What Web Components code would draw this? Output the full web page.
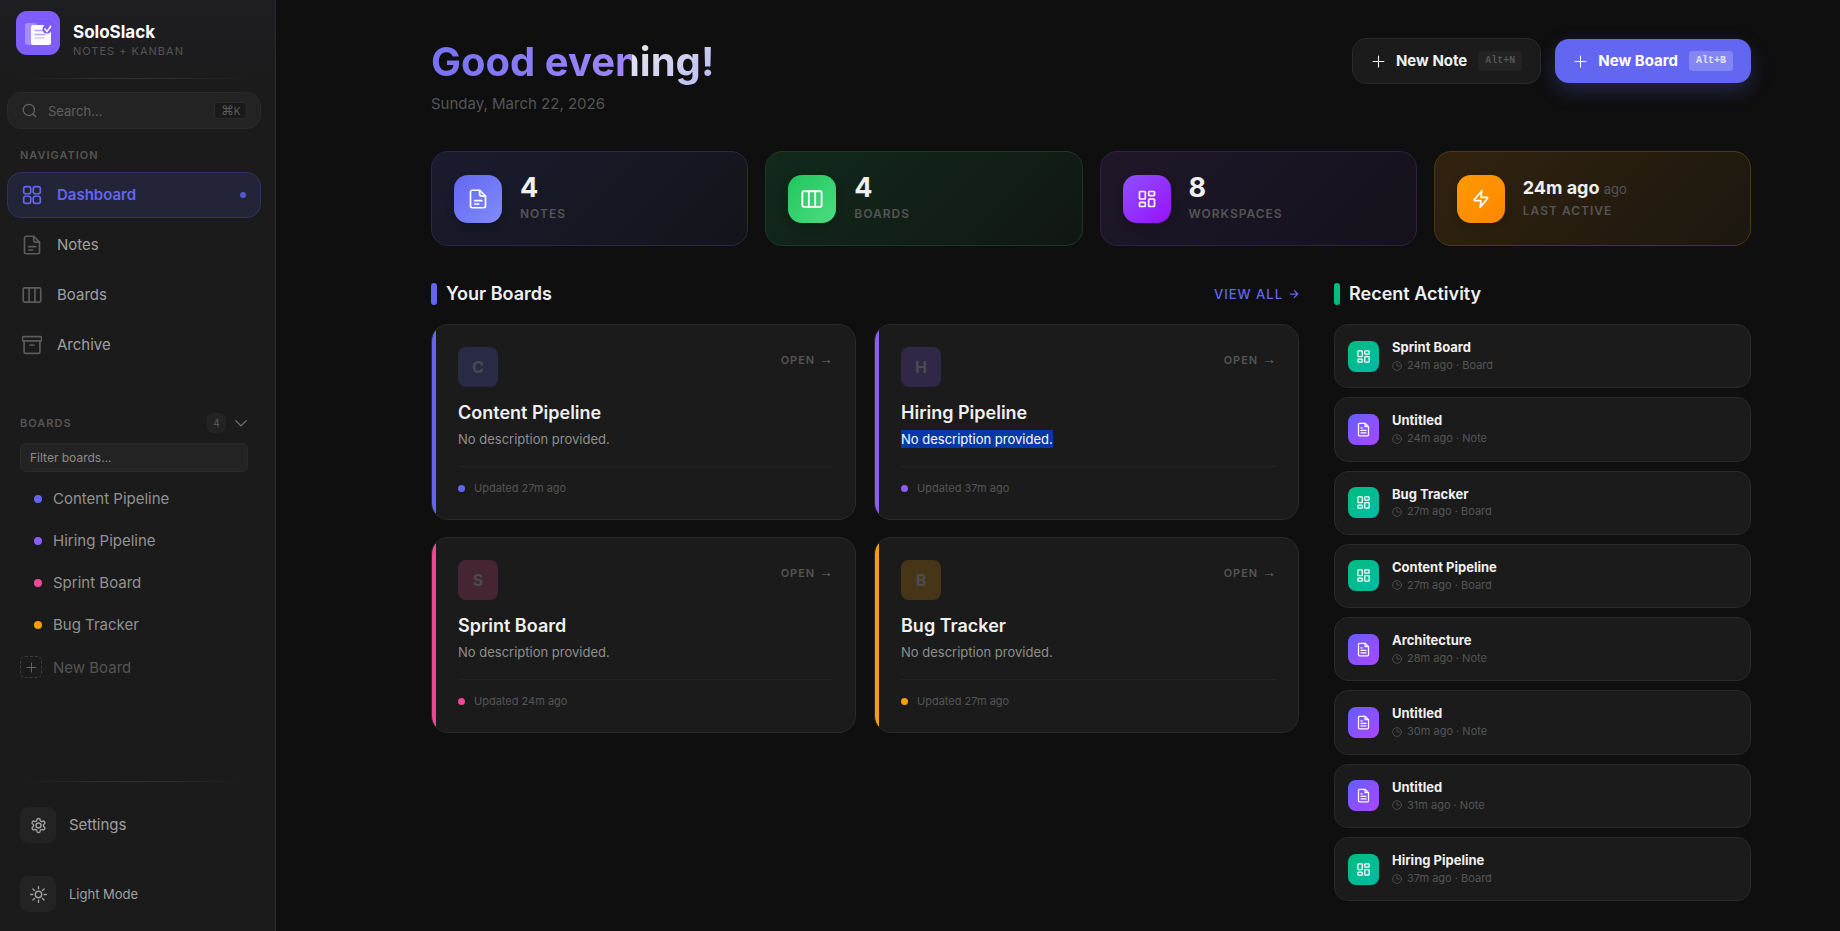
<!DOCTYPE html>
<html lang="en">
<head>
<meta charset="utf-8">
<meta name="viewport" content="width=device-width, initial-scale=1">
<title>SoloSlack</title>
<style>
  html, body {
    margin: 0;
    background: #0f0f0f;
  }

  body {
    --panel: #1b1b1b;
    --raised: #232323;
    --line: #2a2a2a;
    --text: #f0f0f0;
    --text-2: #a0a0a0;
    --muted: #555;
    --accent: #6366f1;
    font-family: Inter, "Liberation Sans", sans-serif;
    color: var(--text);
  }
</style>
</head>
<body>
<solo-app>
  <solo-sidebar slot="sidebar"></solo-sidebar>
  <solo-dashboard></solo-dashboard>
</solo-app>

<script>
const ICONS = {
  search: '<circle cx="11" cy="11" r="9"/><path d="M22 22l-4.500-4.500"/>',
  grid: '<rect x="2" y="2" width="8.500" height="8.500" rx="2.500"/><rect x="13.500" y="2" width="8.500" height="8.500" rx="2.500"/><rect x="2" y="13.500" width="8.500" height="8.500" rx="2.500"/><rect x="13.500" y="13.500" width="8.500" height="8.500" rx="2.500"/>',
  note: '<path d="M14 1.500H5a2 2 0 0 0-2 2v17a2 2 0 0 0 2 2h14a2 2 0 0 0 2-2V8.500z"/><path d="M14 1.500v4.500a2.500 2.500 0 0 0 2.500 2.500H21M8 14h8.500M8 18h5"/>',
  columns: '<rect x="1.500" y="3.500" width="21" height="17" rx="1.500"/><path d="M8.500 3.500v17M15.500 3.500v17"/>',
  archive: '<rect x="0.500" y="2" width="23" height="5" rx="1"/><path d="M2.500 7v13.500a1.500 1.500 0 0 0 1.500 1.500h16a1.500 1.500 0 0 0 1.500-1.500V7M9.500 12h5"/>',
  chevron: '<path d="M3 8l9 9 9-9"/>',
  plus: '<path d="M12 2v20M2 12h20"/>',
  layout: '<rect x="3" y="3" width="7" height="9" rx="1"/><rect x="14" y="3" width="7" height="5" rx="1"/><rect x="14" y="12" width="7" height="9" rx="1"/><rect x="3" y="16" width="7" height="5" rx="1"/>',
  bolt: '<path d="M13 2 4.100 12.700c-.6.700-.2 1.300.5 1.300H12l-1 8 8.900-10.700c.6-.7.2-1.300-.5-1.300H12z"/>',
  file: '<path d="M14.500 2H5.500a1.500 1.500 0 0 0-1.500 1.500v17a1.500 1.500 0 0 0 1.500 1.500h13a1.500 1.500 0 0 0 1.500-1.500V7.500z"/><path d="M14.500 2v5.500H20M8 9.500h2M8 13.500h8M8 17.500h8"/>',
  clock: '<circle cx="12" cy="12" r="10.500"/><path d="M12 5.500V12h5.500"/>',
  arrow: '<path d="M3 12h18M13 4l8 8-8 8"/>',
  gear: '<path d="M12.220 2h-.44a2 2 0 0 0-2 2v.18a2 2 0 0 1-1 1.730l-.43.250a2 2 0 0 1-2 0l-.15-.08a2 2 0 0 0-2.730.730l-.22.380a2 2 0 0 0 .73 2.730l.15.100a2 2 0 0 1 1 1.720v.510a2 2 0 0 1-1 1.740l-.15.090a2 2 0 0 0-.73 2.730l.22.380a2 2 0 0 0 2.730.730l.15-.08a2 2 0 0 1 2 0l.43.250a2 2 0 0 1 1 1.730V20a2 2 0 0 0 2 2h.44a2 2 0 0 0 2-2v-.18a2 2 0 0 1 1-1.730l.43-.25a2 2 0 0 1 2 0l.15.080a2 2 0 0 0 2.730-.73l.22-.39a2 2 0 0 0-.73-2.730l-.15-.08a2 2 0 0 1-1-1.740v-.5a2 2 0 0 1 1-1.740l.15-.09a2 2 0 0 0 .73-2.730l-.22-.38a2 2 0 0 0-2.730-.73l-.15.080a2 2 0 0 1-2 0l-.43-.25a2 2 0 0 1-1-1.730V4a2 2 0 0 0-2-2z"/><circle cx="12" cy="12" r="3.500"/>',
  sun: '<circle cx="12" cy="12" r="4.500"/><path d="M12 1v3M12 20v3M1 12h3M20 12h3M4.200 4.200l2 2M17.800 17.800l2 2M4.200 19.800l2-2M17.800 6.200l2-2"/>'
};

class SoloIcon extends HTMLElement {
  connectedCallback() {
    const size = this.getAttribute('size') || 20;
    const weight = this.getAttribute('weight') || 2;
    this.attachShadow({ mode: 'open' }).innerHTML = `
      <style>
        :host { display: inline-flex; flex: none; }
        svg { display: block; fill: none; stroke: currentColor; stroke-linecap: round; stroke-linejoin: round; }
      </style>
      <svg width="${size}" height="${size}" viewBox="0 0 24 24" stroke-width="${weight}" aria-hidden="true">${ICONS[this.getAttribute('name')]}</svg>
    `;
  }
}
customElements.define('solo-icon', SoloIcon);

class SoloApp extends HTMLElement {
  constructor() {
    super();
    this.attachShadow({ mode: 'open' }).innerHTML = `
      <style>
        :host { display: grid; grid-template-columns: 276px 1fr; height: 100vh; overflow: hidden; }
        main { overflow: hidden; padding: 38px 24px 24px 90px; }
      </style>
      <slot name="sidebar"></slot>
      <main><slot></slot></main>
    `;
  }
}
customElements.define('solo-app', SoloApp);

class SoloNavItem extends HTMLElement {
  connectedCallback() {
    this.attachShadow({ mode: 'open' }).innerHTML = `
      <style>
        :host { display: block; }
        a {
          display: flex;
          align-items: center;
          gap: 15px;
          box-sizing: border-box;
          height: 46px;
          padding: 0 14px;
          border: 1px solid transparent;
          border-radius: 14px;
          color: var(--text-2);
          font-size: 15px;
          line-height: 20px;
          text-decoration: none;
        }
        solo-icon { color: #5c5c5c; }
        :host([active]) a {
          background: #242438;
          border-color: #313160;
          color: var(--accent);
          font-weight: 600;
        }
        :host([active]) solo-icon { color: var(--accent); }
        :host([active]) a::after {
          content: "";
          width: 6px;
          height: 6px;
          margin-left: auto;
          border-radius: 50%;
          background: #5557cf;
        }
      </style>
      <a href="#"><solo-icon name="${this.getAttribute('icon')}" size="20"></solo-icon><span><slot></slot></span></a>
    `;
  }
}
customElements.define('solo-nav-item', SoloNavItem);

class SoloBoardLink extends HTMLElement {
  connectedCallback() {
    this.attachShadow({ mode: 'open' }).innerHTML = `
      <style>
        :host { display: block; }
        a {
          display: flex;
          align-items: center;
          gap: 11px;
          height: 42px;
          padding-left: 14px;
          color: #929292;
          font-size: 15px;
          line-height: 20px;
          text-decoration: none;
        }
        i { width: 8px; height: 8px; border-radius: 50%; background: ${this.getAttribute('color')}; }
      </style>
      <a href="#"><i></i><slot></slot></a>
    `;
  }
}
customElements.define('solo-board-link', SoloBoardLink);

class SoloSidebar extends HTMLElement {
  constructor() {
    super();
    this.attachShadow({ mode: 'open' }).innerHTML = `
      <style>
        :host {
          display: flex;
          flex-direction: column;
          box-sizing: border-box;
          height: 100vh;
          padding: 11px 14px 19px 7px;
          border-right: 1px solid var(--line);
          background: linear-gradient(#1e1e22, var(--panel) 100px);
        }
        .brand { display: flex; gap: 13px; padding-left: 9px; }
        .logo { flex: none; display: block; }
        .name { padding-top: 11px; }
        .name b { display: block; font-size: 17px; line-height: 20px; color: #fff; }
        .name small { display: block; margin-top: 2px; font-size: 11px; line-height: 14px; letter-spacing: 1px; color: var(--muted); }
        hr { width: 234px; height: 1px; margin: 20px 0 0 9px; border: 0; background: linear-gradient(90deg, transparent, #333, transparent); }
        .search {
          display: flex;
          align-items: center;
          gap: 11px;
          box-sizing: border-box;
          height: 37px;
          margin-top: 13px;
          padding: 0 13px 0 14px;
          border: 1px solid var(--line);
          border-radius: 14px;
          background: var(--raised);
          color: #666;
        }
        input { font: inherit; color: var(--text); outline: none; }
        .search input { flex: 1; min-width: 0; padding: 0; border: 0; background: none; font-size: 13px; }
        .search input::placeholder { color: #606060; }
        .search kbd {
          display: flex;
          align-items: center;
          justify-content: center;
          box-sizing: border-box;
          width: 33px;
          height: 17px;
          border: 1px solid var(--line);
          border-radius: 4px;
          background: #1a1a1a;
          color: #5c5c5c;
          font: 10px Inter, sans-serif;
        }
        .search kbd span { font: 13px/14px "DejaVu Sans", sans-serif; }
        h2 { margin: 0; font-size: 11px; line-height: 16px; font-weight: 600; letter-spacing: 1px; color: var(--muted); }
        nav { display: grid; }
        .primary { gap: 4px; margin-top: 9px; }
        .nav-title { margin: 18px 0 0 13px; }
        .boards { padding: 45px 13px 0; }
        .boards header { display: flex; align-items: center; height: 20px; }
        .count {
          display: grid;
          place-items: center;
          width: 19px;
          height: 20px;
          margin-left: auto;
          border-radius: 6px;
          background: var(--raised);
          font-size: 10px;
          color: #5c5c5c;
        }
        button { font: inherit; border: 0; background: none; cursor: pointer; }
        .toggle { display: flex; margin-left: 8px; padding: 0; color: #777; }
        .filter {
          box-sizing: border-box;
          width: 100%;
          height: 29px;
          margin-top: 10px;
          padding: 0 9px;
          border: 1px solid var(--line);
          border-radius: 6px;
          background: var(--raised);
          font-size: 12px;
        }
        .filter::placeholder { color: #8c8c8c; }
        .list { margin-top: 6px; }
        .new { display: flex; align-items: center; gap: 11px; height: 42px; padding: 0; color: var(--muted); font-size: 15px; }
        .new span { display: grid; place-items: center; box-sizing: border-box; width: 22px; height: 22px; border: 1px dashed #3c3c3c; border-radius: 5px; color: #6c6c6c; }
        footer { margin-top: auto; }
        .row {
          display: flex;
          align-items: center;
          gap: 13px;
          height: 36px;
          padding: 0 0 0 13px;
          color: var(--text-2);
          font-size: 15px;
          line-height: 20px;
          text-decoration: none;
        }
        .row span { display: grid; place-items: center; width: 36px; height: 36px; border-radius: 8px; background: var(--raised); }
        .settings { margin: 25px 0 33px; }
        .mode { font-size: 13px; }
      </style>
      <div class="brand">
        <svg class="logo" width="44" height="44" viewBox="0 0 44 44" aria-hidden="true">
          <rect width="44" height="44" rx="11" fill="#7f5dfc"/>
          <path d="M15 14v-2q0-2 3-2h15q3 0 3 3v2" fill="none" stroke="#7654f5"/>
          <rect x="9" y="12" width="12" height="22" rx="3" fill="#a58efc"/>
          <rect x="15" y="14" width="20" height="20" rx="2" fill="#fbfaff"/>
          <path d="M19 19.500h9M19 23.500h10" stroke="#b9a8fb" stroke-width="1.500" stroke-linecap="round"/>
          <path d="M19 27h9" stroke="#d5cbfd" stroke-width="1.500" stroke-linecap="round"/>
          <circle cx="31" cy="18" r="4.500" fill="#7a58f6"/>
          <path d="M28.500 17.500l2.500 3 4-5.500" fill="none" stroke="#fff" stroke-width="1.500"/>
        </svg>
        <div class="name"><b>SoloSlack</b><small>NOTES + KANBAN</small></div>
      </div>
      <hr>
      <label class="search">
        <solo-icon name="search" size="15"></solo-icon>
        <input type="text" placeholder="Search..." aria-label="Search">
        <kbd><span>⌘</span>K</kbd>
      </label>
      <h2 class="nav-title">NAVIGATION</h2>
      <nav class="primary">
        <solo-nav-item icon="grid" active>Dashboard</solo-nav-item>
        <solo-nav-item icon="note">Notes</solo-nav-item>
        <solo-nav-item icon="columns">Boards</solo-nav-item>
        <solo-nav-item icon="archive">Archive</solo-nav-item>
      </nav>
      <section class="boards">
        <header>
          <h2>BOARDS</h2>
          <span class="count">4</span>
          <button class="toggle" aria-label="Collapse boards"><solo-icon name="chevron" size="14"></solo-icon></button>
        </header>
        <input class="filter" type="text" placeholder="Filter boards..." aria-label="Filter boards">
        <nav class="list">
          <solo-board-link color="#6366f1">Content Pipeline</solo-board-link>
          <solo-board-link color="#8b5cf6">Hiring Pipeline</solo-board-link>
          <solo-board-link color="#ec4899">Sprint Board</solo-board-link>
          <solo-board-link color="#f59e0b">Bug Tracker</solo-board-link>
          <button class="new"><span><solo-icon name="plus" size="11"></solo-icon></span>New Board</button>
        </nav>
      </section>
      <footer>
        <hr>
        <a class="row settings" href="#"><span><solo-icon name="gear" size="17"></solo-icon></span>Settings</a>
        <button class="row mode"><span><solo-icon name="sun" size="17"></solo-icon></span>Light Mode</button>
      </footer>
    `;
  }
}
customElements.define('solo-sidebar', SoloSidebar);

class SoloAction extends HTMLElement {
  connectedCallback() {
    this.attachShadow({ mode: 'open' }).innerHTML = `
      <style>
        :host { display: block; }
        button {
          display: flex;
          align-items: center;
          gap: 11px;
          box-sizing: border-box;
          height: 46px;
          padding: 0 18px 0 19px;
          border: 1px solid var(--line);
          border-radius: 14px;
          background: var(--panel);
          color: var(--text);
          font: 700 15px/20px Inter, "Liberation Sans", sans-serif;
          cursor: pointer;
        }
        kbd {
          padding: 0 7px;
          border-radius: 4px;
          background: #232323;
          color: var(--muted);
          font: bold 10px/20px "Liberation Mono", monospace;
        }
        :host([primary]) button {
          height: 44px;
          border: 0;
          background: var(--accent);
          color: #fff;
          box-shadow: 0 8px 20px rgba(99, 102, 241, .25);
        }
        :host([primary]) kbd { background: #8486f4; color: #e4e4fd; }
      </style>
      <button><solo-icon name="plus" size="13"></solo-icon><slot></slot><kbd>${this.getAttribute('keys')}</kbd></button>
    `;
  }
}
customElements.define('solo-action', SoloAction);

class SoloStat extends HTMLElement {
  connectedCallback() {
    this.attachShadow({ mode: 'open' }).innerHTML = `
      <style>
        :host {
          display: flex;
          align-items: center;
          gap: 18px;
          box-sizing: border-box;
          height: 95px;
          padding: 0 22px;
          border: 1px solid;
          border-radius: 17px;
        }
        :host([tone="indigo"]) { background: linear-gradient(135deg, #1a1b2e, #14141a); border-color: #28284c; --chip: linear-gradient(135deg, #6366f1, #818cf8); }
        :host([tone="green"]) { background: linear-gradient(135deg, #12291c, #111713); border-color: #173c26; --chip: linear-gradient(135deg, #22c55e, #4ade80); }
        :host([tone="violet"]) { background: linear-gradient(135deg, #201728, #191524 40%, #15121a); border-color: #301f4a; --chip: linear-gradient(135deg, #8e51ff, #9810fa); }
        :host([tone="amber"]) { background: linear-gradient(135deg, #32230f, #1b170f); border-color: #4f370f; --chip: linear-gradient(135deg, #fe9a00, #ff8600); }
        .chip {
          display: grid;
          place-items: center;
          width: 48px;
          height: 48px;
          border-radius: 14px;
          background: var(--chip);
          box-shadow: 0 4px 8px rgba(0, 0, 0, .2);
          color: #fff;
        }
        .text { padding-bottom: 3px; }
        .value { font-size: 27px; line-height: 32px; font-weight: 700; }
        .value small { font-size: 13px; font-weight: 400; color: var(--muted); }
        .label { margin-top: 2px; font-size: 12px; line-height: 16px; font-weight: 600; letter-spacing: 1px; color: var(--muted); }
        :host([tone="amber"]) .value { font-size: 18px; line-height: 24px; }
      </style>
      <span class="chip"><solo-icon name="${this.getAttribute('icon')}" size="${this.getAttribute('icon-size') || 20}"></solo-icon></span>
      <div class="text">
        <div class="value">${this.getAttribute('value')}${this.hasAttribute('unit') ? ` <small>${this.getAttribute('unit')}</small>` : ''}</div>
        <div class="label"><slot></slot></div>
      </div>
    `;
  }
}
customElements.define('solo-stat', SoloStat);

class SoloSectionTitle extends HTMLElement {
  connectedCallback() {
    this.attachShadow({ mode: 'open' }).innerHTML = `
      <style>
        :host { display: flex; align-items: center; justify-content: space-between; height: 22px; margin-bottom: 19px; }
        h2 { display: flex; align-items: center; gap: 9px; margin: 0; font-size: 18px; line-height: 20px; font-weight: 600; }
        h2::before { content: ""; width: 6px; height: 22px; border-radius: 3px; background: ${this.getAttribute('color')}; }
      </style>
      <h2><slot></slot></h2>
      <slot name="more"></slot>
    `;
  }
}
customElements.define('solo-section-title', SoloSectionTitle);

class SoloBoardCard extends HTMLElement {
  connectedCallback() {
    const name = this.getAttribute('name');
    this.attachShadow({ mode: 'open' }).innerHTML = `
      <style>
        :host {
          display: block;
          --c: ${this.getAttribute('color')};
          padding: 22px 22px 23px;
          border: 1px solid var(--line);
          border-radius: 17px;
          background: linear-gradient(90deg, var(--c) 4px, var(--panel) 4px);
        }
        article { padding-left: 4px; }
        .top { display: flex; justify-content: space-between; }
        .avatar {
          display: grid;
          place-items: center;
          width: 40px;
          height: 40px;
          border-radius: 8px;
          background: color-mix(in srgb, var(--c) 20%, var(--panel));
          color: #4c4c50;
          font-size: 16px;
          font-weight: 700;
        }
        a { margin-top: 4px; color: var(--muted); font-size: 11px; line-height: 16px; font-weight: 600; letter-spacing: 1px; text-decoration: none; }
        a span { font-family: "Liberation Sans", sans-serif; font-size: 14px; letter-spacing: 0; color: #6a6a6a; }
        h3 { margin: 14px 0 3px; font-size: 18px; line-height: 24px; font-weight: 600; }
        p { margin: 0; font-size: 13px; line-height: 22px; color: #8f8f8f; }
        mark { padding: 1px 0; background: none; color: inherit; }
        :host([marked]) mark { background: #0438a8; color: #fff; }
        footer { display: flex; align-items: center; gap: 9px; margin-top: 16px; padding-top: 13px; border-top: 1px solid #232323; font-size: 11px; line-height: 16px; color: var(--muted); }
        i { width: 7px; height: 7px; border-radius: 50%; background: var(--c); }
      </style>
      <article>
        <div class="top"><span class="avatar">${name[0]}</span><a href="#">OPEN <span>→</span></a></div>
        <h3>${name}</h3>
        <p><mark><slot></slot></mark></p>
        <footer><i></i>Updated ${this.getAttribute('updated')}</footer>
      </article>
    `;
  }
}
customElements.define('solo-board-card', SoloBoardCard);

class SoloActivity extends HTMLElement {
  connectedCallback() {
    const kind = this.getAttribute('kind');
    this.attachShadow({ mode: 'open' }).innerHTML = `
      <style>
        :host { display: block; }
        a {
          display: flex;
          align-items: center;
          gap: 13px;
          padding: 14px 13px;
          border: 1px solid var(--line);
          border-radius: 14px;
          background: var(--panel);
          color: var(--text);
          text-decoration: none;
        }
        .chip { display: grid; place-items: center; width: 31px; height: 31px; border-radius: 8px; color: #fff; background: linear-gradient(135deg, #00bc7d, #00bba7); }
        .note { background: linear-gradient(135deg, #615fff, #ad46ff); }
        b { display: block; font-size: 13px; line-height: 1.3; font-weight: 700; }
        .meta { display: flex; align-items: center; gap: 5px; margin-top: 2px; font-size: 11px; line-height: 1.4; color: var(--muted); }
      </style>
      <a href="#">
        <span class="chip ${kind.toLowerCase()}"><solo-icon name="${kind === 'Note' ? 'file' : 'layout'}" size="15"></solo-icon></span>
        <span><b><slot></slot></b><span class="meta"><solo-icon name="clock" size="10"></solo-icon>${this.getAttribute('when')} · ${kind}</span></span>
      </a>
    `;
  }
}
customElements.define('solo-activity', SoloActivity);

class SoloDashboard extends HTMLElement {
  constructor() {
    super();
    this.attachShadow({ mode: 'open' }).innerHTML = `
      <style>
        :host { display: block; max-width: 1320px; margin: 0 auto; }
        .hero { display: flex; justify-content: space-between; align-items: flex-start; }
        h1 {
          width: fit-content;
          margin: 0;
          font-size: 40px;
          line-height: 48px;
          font-weight: 700;
          color: transparent;
          background:
            linear-gradient(90deg, #7671f4, #a086fb) left / 71% 100% no-repeat,
            linear-gradient(135deg, #ececf0, #b6b8f0) right / 29% 100% no-repeat;
          -webkit-background-clip: text;
          background-clip: text;
        }
        .date { margin: 6px 0 0; font-size: 15px; line-height: 24px; color: var(--muted); }
        .actions { display: flex; align-items: center; gap: 14px; }
        .stats { display: grid; grid-template-columns: repeat(4, 1fr); gap: 17px; margin-top: 35px; }
        .columns { display: grid; grid-template-columns: 1fr 417px; gap: 35px; margin-top: 37px; }
        .boards { display: grid; grid-template-columns: 1fr 1fr; gap: 17px 18px; }
        .feed { display: grid; gap: 9px; }
        .more { display: flex; align-items: center; gap: 6px; color: var(--accent); font-size: 13px; line-height: 18px; font-weight: 500; letter-spacing: 1px; text-decoration: none; }
      </style>
      <header class="hero">
        <div>
          <h1>Good evening!</h1>
          <p class="date">Sunday, March 22, 2026</p>
        </div>
        <div class="actions">
          <solo-action keys="Alt+N">New Note</solo-action>
          <solo-action keys="Alt+B" primary>New Board</solo-action>
        </div>
      </header>
      <section class="stats">
        <solo-stat tone="indigo" icon="note" value="4">NOTES</solo-stat>
        <solo-stat tone="green" icon="columns" icon-size="22" value="4">BOARDS</solo-stat>
        <solo-stat tone="violet" icon="layout" value="8">WORKSPACES</solo-stat>
        <solo-stat tone="amber" icon="bolt" value="24m ago" unit="ago">LAST ACTIVE</solo-stat>
      </section>
      <div class="columns">
        <section>
          <solo-section-title color="#6366f1">Your Boards<a class="more" slot="more" href="#">VIEW ALL <solo-icon name="arrow" size="10" weight="3"></solo-icon></a></solo-section-title>
          <div class="boards">
            <solo-board-card name="Content Pipeline" color="#6366f1" updated="27m ago">No description provided.</solo-board-card>
            <solo-board-card name="Hiring Pipeline" color="#8b5cf6" updated="37m ago" marked>No description provided.</solo-board-card>
            <solo-board-card name="Sprint Board" color="#ec4899" updated="24m ago">No description provided.</solo-board-card>
            <solo-board-card name="Bug Tracker" color="#f59e0b" updated="27m ago">No description provided.</solo-board-card>
          </div>
        </section>
        <section>
          <solo-section-title color="#00bc7d">Recent Activity</solo-section-title>
          <div class="feed">
            <solo-activity kind="Board" when="24m ago">Sprint Board</solo-activity>
            <solo-activity kind="Note" when="24m ago">Untitled</solo-activity>
            <solo-activity kind="Board" when="27m ago">Bug Tracker</solo-activity>
            <solo-activity kind="Board" when="27m ago">Content Pipeline</solo-activity>
            <solo-activity kind="Note" when="28m ago">Architecture</solo-activity>
            <solo-activity kind="Note" when="30m ago">Untitled</solo-activity>
            <solo-activity kind="Note" when="31m ago">Untitled</solo-activity>
            <solo-activity kind="Board" when="37m ago">Hiring Pipeline</solo-activity>
          </div>
        </section>
      </div>
    `;
  }
}
customElements.define('solo-dashboard', SoloDashboard);
</script>
</body>
</html>
